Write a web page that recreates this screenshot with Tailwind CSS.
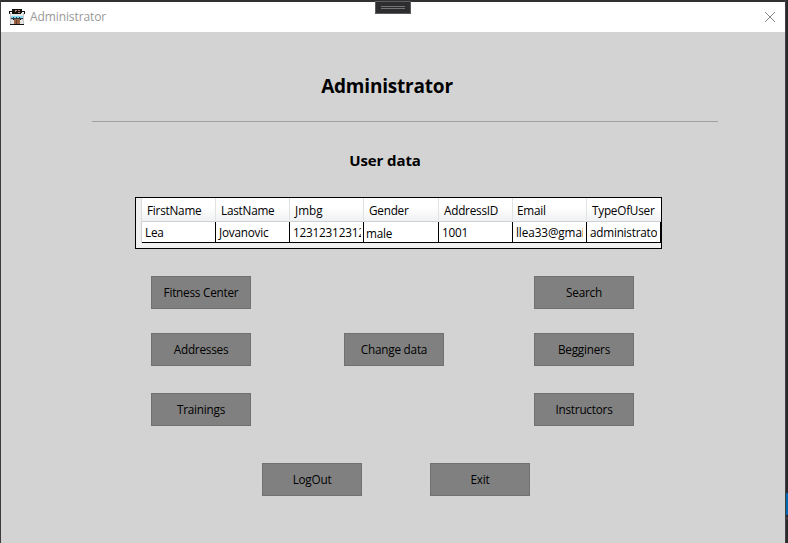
<!DOCTYPE html>
<html lang="en">
<head>
<meta charset="utf-8">
<title>Administrator</title>
<script src="https://cdn.jsdelivr.net/npm/@tailwindcss/browser@4"></script>
</head>
<body class="w-[788px] h-[543px] overflow-hidden bg-[#29292b] flex font-['Open_Sans','Noto_Sans',sans-serif] text-[11.75px] tracking-[-0.23px] text-black">
<div class="w-px shrink-0 bg-[#3c3a3d]"></div>
<main class="w-[784px] h-[543px] shrink-0 border-t-2 border-[#302f31] bg-[#d3d3d3] flex flex-col">
  <header class="h-[30px] shrink-0 bg-white flex items-center pl-2 pr-[10px]">
    <svg class="w-4 h-4" viewBox="0 0 16 16" shape-rendering="crispEdges">
      <path fill="#c9c7c8" d="M1 4h14v11H1z"/><path fill="#e6e6e6" d="M2 4h12v3H2zM2 11h3v4H2zM11 11h3v4h-3z"/>
      <path fill="#111" d="M3 0h10v4H3zM0 2h3v1H0zM13 2h3v1h-3zM0 3h1v2H0zM15 3h1v2h-1zM3 4h9v1H3zM1 15h14v1H1zM4 10h8v1H4z"/>
      <path fill="#c08068" d="M6 1h2v1H6zM9 1h2v1H9zM6 2h1v1H6zM9 3h2v1H9z"/>
      <path fill="#8cd9f2" d="M2 7h12v2H2z"/>
      <path fill="#263c46" d="M2 9h12v1H2zM4 8h1v1H4zM7 8h1v1H7zM10 8h1v1h-1z"/>
      <path fill="#9a6244" d="M5 10h6v5H5z"/><path fill="#65402f" d="M7 11h1v4H7z"/>
    </svg>
    <span class="ml-[5px] text-[#999] text-[12px] tracking-[-0.1px]">Administrator</span>
    <svg class="ml-auto w-[10px] h-[10px]" viewBox="0 0 10 10"><path d="M0 0L10 10M10 0L0 10" stroke="#858585" stroke-width="1"/></svg>
  </header>
  <h1 class="mt-[40px] h-[28px] w-[772px] text-center text-[19px] leading-[28px] font-bold tracking-[-0.2px]">Administrator</h1>
  <div class="mt-[21px] ml-[91px] w-[626px] h-px shrink-0 bg-[#a0a0a0]"></div>
  <h2 class="mt-[27px] h-[22px] w-[768px] text-center text-[15px] leading-[22px] font-bold tracking-[-0.1px]">User data</h2>
  <section class="mt-[26px] ml-[134px] w-[527px] h-[52px] shrink-0 border border-black bg-[#f0f0f0]">
    <div class="ml-[6px] h-[24px] grid grid-cols-[74px_74px_74px_75px_74px_74px_74px] bg-linear-to-b from-white from-40% to-[#f0f1f3] border-b border-[#d0d1d3] leading-[25px] whitespace-nowrap shadow-[-1px_0_#dcdde0]">
      <div class="pl-[5px] border-r border-[#e1e2e4]">FirstName</div>
      <div class="pl-[5px] border-r border-[#e1e2e4]">LastName</div>
      <div class="pl-[5px] border-r border-[#e1e2e4] tracking-normal">Jmbg</div>
      <div class="pl-[5px] border-r border-[#e1e2e4]">Gender</div>
      <div class="pl-[5px] border-r border-[#e1e2e4]">AddressID</div>
      <div class="pl-[4px] border-r border-[#e1e2e4]">Email</div>
      <div class="pl-[5px]">TypeOfUser</div>
    </div>
    <div class="ml-[6px] h-[21px] grid grid-cols-[74px_74px_74px_75px_74px_74px_74px] bg-white border-b border-black leading-[20px] whitespace-nowrap shadow-[-1px_0_#d0d1d3]">
      <div class="pl-[3px] border-r border-black">Lea</div>
      <div class="pl-[3px] border-r border-black">Jovanovic</div>
      <div class="pl-[3px] pr-[2px] border-r border-black"><div class="overflow-hidden tracking-[-0.2px]">12312312312</div></div>
      <div class="pl-[2px] pt-px border-r border-black">male</div>
      <div class="pl-[3px] border-r border-black">1001</div>
      <div class="pl-[3px] pr-[3px] border-r border-black"><div class="overflow-hidden tracking-[-0.1px]">llea33@gmai</div></div>
      <div class="pl-[3px] pr-[3px] border-r border-black"><div class="overflow-hidden">administrato</div></div>
    </div>
  </section>
  <nav class="mt-[27px] ml-[150px] grid grid-cols-[193px_190px_100px] grid-rows-[57px_60px_33px] h-[150px] w-[483px] shrink-0">
    <button class="w-[100px] h-[33px] bg-[#808080] border border-[#707070]">Fitness Center</button>
    <button class="col-start-3 w-[100px] h-[33px] bg-[#808080] border border-[#707070]">Search</button>
    <button class="w-[100px] h-[33px] bg-[#808080] border border-[#707070]">Addresses</button>
    <button class="w-[100px] h-[33px] bg-[#808080] border border-[#707070]">Change data</button>
    <button class="w-[100px] h-[33px] bg-[#808080] border border-[#707070]">Begginers</button>
    <button class="w-[100px] h-[33px] bg-[#808080] border border-[#707070]">Trainings</button>
    <button class="col-start-3 w-[100px] h-[33px] bg-[#808080] border border-[#707070]">Instructors</button>
  </nav>
  <div class="mt-[37px] ml-[261px] flex gap-[68px]">
    <button class="w-[100px] h-[33px] bg-[#808080] border border-[#707070]">LogOut</button>
    <button class="w-[100px] h-[33px] bg-[#808080] border border-[#707070]">Exit</button>
  </div>
</main>
<aside class="w-[3px] shrink-0 border-l border-[#414143] pt-[493px]">
  <div class="h-[22px] bg-[#0066ad]"></div>
  <div class="h-[3px] mt-[2px] bg-[#3b3b3d]"></div>
</aside>
<div class="absolute left-[375px] top-px w-[36px] h-[13px] bg-[#2d2d30] border border-[#5c5c5e] flex flex-col items-center justify-center gap-px">
  <div class="w-[24px] h-px bg-[#747476]"></div>
  <div class="w-[24px] h-px bg-[#747476]"></div>
</div>
</body>
</html>
